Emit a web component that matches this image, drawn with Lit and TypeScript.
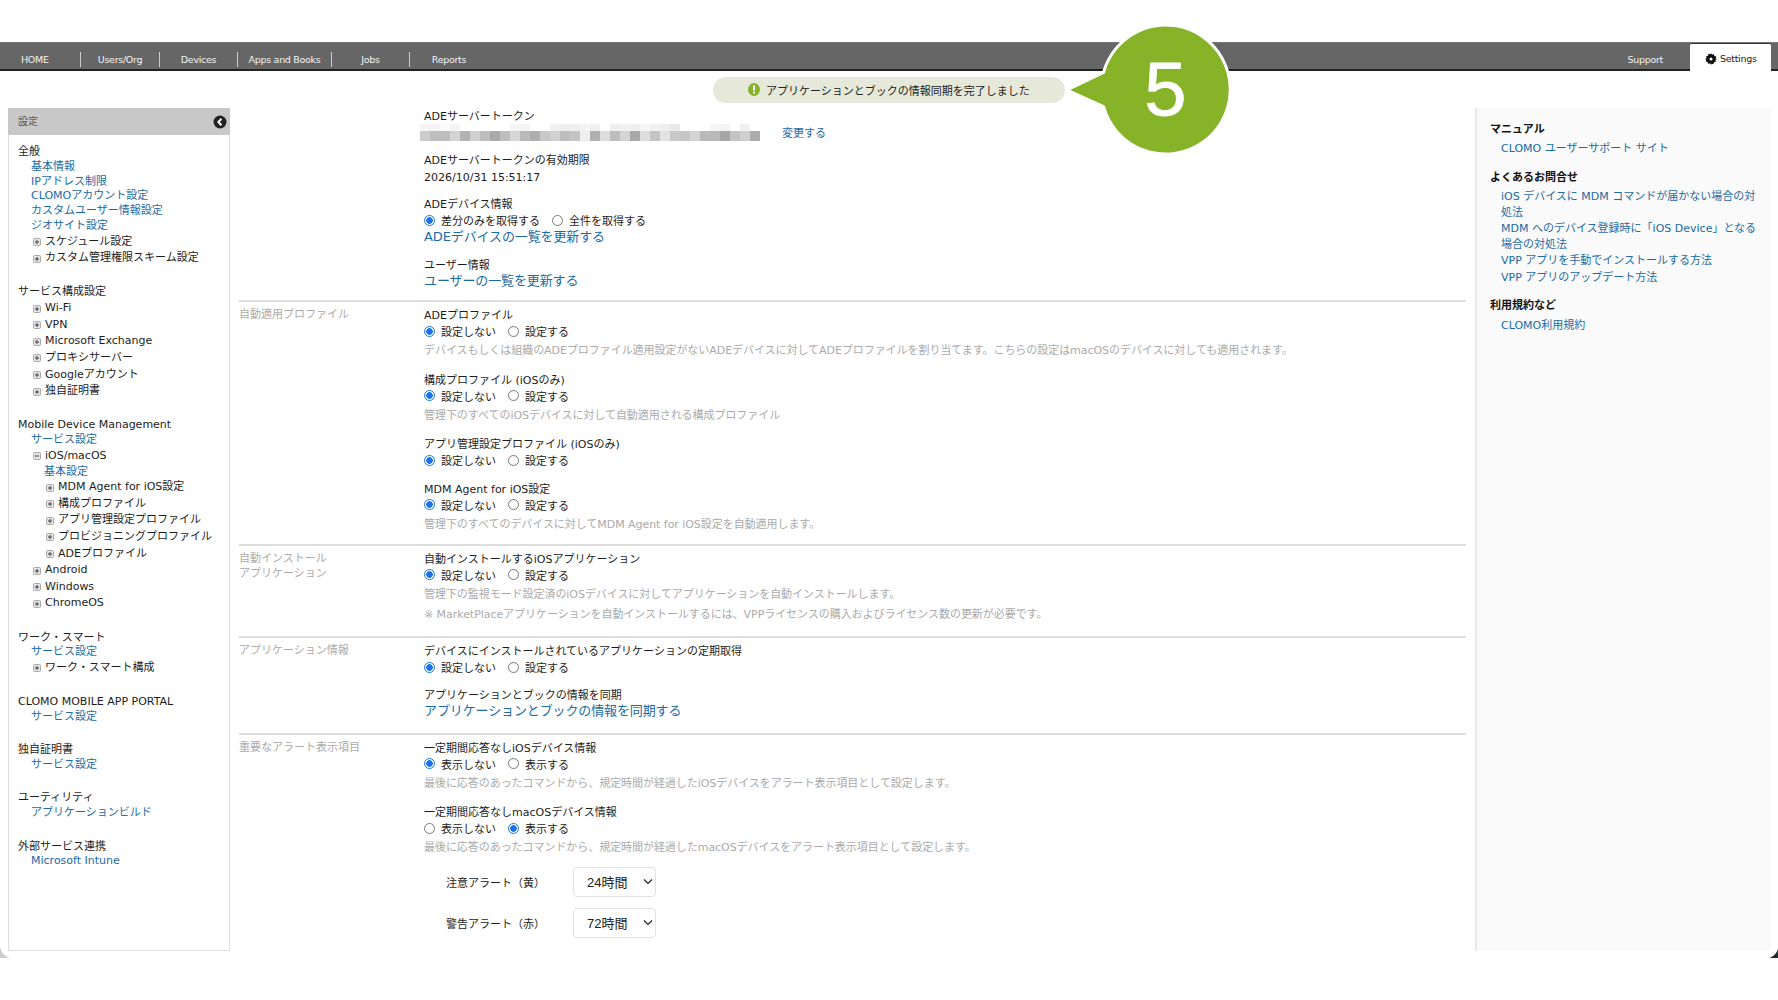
import { LitElement, html, css } from 'lit';
import { customElement } from 'lit/decorators.js';

type NavRow = { t: 'head' | 'link' | 'sub' | 'tree' | 'open' | 'tree2'; label: string };

const SIDE_GROUPS: NavRow[][] = [
  [
    { t: 'head', label: '全般' },
    { t: 'link', label: '基本情報' },
    { t: 'link', label: 'IPアドレス制限' },
    { t: 'link', label: 'CLOMOアカウント設定' },
    { t: 'link', label: 'カスタムユーザー情報設定' },
    { t: 'link', label: 'ジオサイト設定' },
    { t: 'tree', label: 'スケジュール設定' },
    { t: 'tree', label: 'カスタム管理権限スキーム設定' },
  ],
  [
    { t: 'head', label: 'サービス構成設定' },
    { t: 'tree', label: 'Wi-Fi' },
    { t: 'tree', label: 'VPN' },
    { t: 'tree', label: 'Microsoft Exchange' },
    { t: 'tree', label: 'プロキシサーバー' },
    { t: 'tree', label: 'Googleアカウント' },
    { t: 'tree', label: '独自証明書' },
  ],
  [
    { t: 'head', label: 'Mobile Device Management' },
    { t: 'link', label: 'サービス設定' },
    { t: 'open', label: 'iOS/macOS' },
    { t: 'sub', label: '基本設定' },
    { t: 'tree2', label: 'MDM Agent for iOS設定' },
    { t: 'tree2', label: '構成プロファイル' },
    { t: 'tree2', label: 'アプリ管理設定プロファイル' },
    { t: 'tree2', label: 'プロビジョニングプロファイル' },
    { t: 'tree2', label: 'ADEプロファイル' },
    { t: 'tree', label: 'Android' },
    { t: 'tree', label: 'Windows' },
    { t: 'tree', label: 'ChromeOS' },
  ],
  [
    { t: 'head', label: 'ワーク・スマート' },
    { t: 'link', label: 'サービス設定' },
    { t: 'tree', label: 'ワーク・スマート構成' },
  ],
  [
    { t: 'head', label: 'CLOMO MOBILE APP PORTAL' },
    { t: 'link', label: 'サービス設定' },
  ],
  [
    { t: 'head', label: '独自証明書' },
    { t: 'link', label: 'サービス設定' },
  ],
  [
    { t: 'head', label: 'ユーティリティ' },
    { t: 'link', label: 'アプリケーションビルド' },
  ],
  [
    { t: 'head', label: '外部サービス連携' },
    { t: 'link', label: 'Microsoft Intune' },
  ],
];

// blurred token, one gray value per 10px cell
const TOKEN_TOP = [244, 244, 250, 244, 255, 255, 255, 255, 255, 244, 244, 255, 255, 240, 238, 238, 244, 240, 255, 238, 240, 238, 246, 240, 238, 232, 255, 255, 255, 246, 244, 255, 240, 255];
const TOKEN_BOTTOM = [205, 190, 190, 212, 178, 208, 190, 170, 190, 214, 186, 174, 200, 208, 190, 196, 238, 176, 220, 188, 212, 168, 222, 196, 226, 200, 198, 212, 186, 186, 166, 196, 208, 172];

@customElement('app-root')
export class AppRoot extends LitElement {
  static styles = css`
    :host {
      display: block;
      position: relative;
      width: 1778px;
      height: 1000px;
      overflow: hidden;
      background: #fff;
      font-family: 'DejaVu Sans', 'Noto Sans CJK JP', sans-serif;
      font-size: 11px;
      color: #1c1c1c;
      padding-top: 42px;
      box-sizing: border-box;
    }
    a {
      color: #1b6aa5;
      text-decoration: none;
    }

    /* top bar */
    .topbar {
      display: flex;
      align-items: flex-end;
      height: 29px;
      box-sizing: border-box;
      background: #666;
      border-top: 1px solid #777;
      border-bottom: 2px solid #222;
      color: #f2f2f2;
      font-size: 9.5px;
      letter-spacing: -0.3px;
    }
    .tab {
      height: 15px;
      line-height: 15px;
      margin-bottom: 2px;
      text-align: center;
      border-right: 1px solid #ccc;
      box-sizing: border-box;
    }
    .tab.w80 { width: 79px; }
    .tab.home { width: 81px; text-align: left; padding-left: 21px; }
    .tab.w78 { width: 78px; }
    .tab.w94 { width: 94px; }
    .tab.last { border-right: 0; width: 78px; }
    .spacer { flex: 1; }
    .support {
      height: 15px;
      line-height: 15px;
      margin: 0 27px 2px 0;
    }
    .settings {
      display: flex;
      align-items: center;
      gap: 3px;
      width: 81px;
      height: 28px;
      margin-bottom: -2px;
      margin-right: 7px;
      padding: 2px 0 0 15px;
      box-sizing: border-box;
      background: #fff;
      color: #222;
      border-top: 1px solid #333;
      border-radius: 2px 2px 0 0;
    }

    /* columns */
    .columns {
      display: flex;
      align-items: flex-start;
      padding: 37px 0 0 8px;
    }
    .side {
      width: 222px;
      height: 843px;
      box-sizing: border-box;
      border: 1px solid #e0e0e0;
      border-top: 0;
      flex: none;
    }
    .side-head {
      display: flex;
      align-items: center;
      justify-content: space-between;
      height: 27px;
      margin: 0 -1px;
      padding: 0 3px 0 10px;
      background: #c8c8c8;
      color: #555;
      font-size: 10px;
    }
    .side-head span {
      margin-top: -3px;
    }
    .side-body {
      padding: 9px 0 0 9px;
    }
    .group {
      margin-bottom: 18.5px;
    }
    .row {
      display: flex;
      align-items: center;
      box-sizing: border-box;
      padding-top: 2px;
      line-height: 14.8px;
      height: 14.8px;
      white-space: nowrap;
    }
    .row.link { padding-left: 13px; }
    .row.sub { padding-left: 26px; }
    .row.tree, .row.open { height: 16.6px; padding-left: 15px; gap: 4px; }
    .row.tree2 { height: 16.6px; padding-left: 28px; gap: 4px; }

    .main {
      width: 1227px;
      margin-left: 9px;
      flex: none;
    }
    .section {
      display: flex;
      padding: 5px 0 11px;
      border-bottom: 2px solid #ddd;
    }
    .section.first { padding: 0 0 11.5px; }
    .section.install { padding-bottom: 13.5px; }
    .section.sync { padding-bottom: 13.5px; }
    .section.end { border-bottom: 0; }
    .sec-label {
      width: 185px;
      flex: none;
      color: #aaa;
      line-height: 15px;
    }
    .sec-body {
      flex: 1;
      min-width: 0;
    }
    .field + .field {
      margin-top: 12.5px;
    }
    .field + .field.mdm {
      margin-top: 11.5px;
    }
    .first .field + .field {
      margin-top: 11.5px;
    }
    .sync .field + .field {
      margin-top: 11px;
    }
    .end .field.alerts {
      margin-top: 11px;
    }
    .title {
      height: 16px;
      line-height: 18px;
    }
    .value {
      height: 17px;
      line-height: 19px;
    }
    .biglink {
      display: block;
      height: 16px;
      font-size: 13px;
      line-height: 16px;
      letter-spacing: -0.12px;
    }
    .help {
      height: 18px;
      margin-top: 1px;
      color: #aaa;
      line-height: 19px;
      white-space: nowrap;
      letter-spacing: -0.05px;
    }
    .help.note {
      margin-top: 2px;
    }
    .token-row {
      display: flex;
      align-items: center;
      height: 16px;
      margin-left: -4px;
    }
    .token {
      display: flex;
      flex-direction: column;
    }
    .token-line {
      display: flex;
    }
    .token-line.a { height: 7px; }
    .token-line.b { height: 10px; }
    .token-cell {
      width: 10px;
    }
    .change {
      margin-left: 22px;
    }
    .radios {
      display: flex;
      align-items: center;
      box-sizing: border-box;
      padding-bottom: 1px;
      height: 17px;
      gap: 12px;
    }
    .radios label {
      display: flex;
      align-items: center;
      gap: 6px;
    }
    input[type='radio'] {
      appearance: none;
      width: 11px;
      height: 11px;
      margin: 0;
      box-sizing: border-box;
      border: 1px solid #777;
      border-radius: 50%;
      background: #fff;
    }
    input[type='radio']:checked {
      border: 1.5px solid #1a73e8;
      background: radial-gradient(circle, #1a73e8 0 3px, #fff 3.6px);
    }
    .alert {
      display: flex;
      align-items: center;
      height: 30px;
      padding-left: 22px;
    }
    .alert + .alert {
      margin-top: 11px;
    }
    .alert span {
      width: 127px;
    }
    .select-wrap {
      position: relative;
      width: 83px;
      height: 30px;
    }
    select {
      appearance: none;
      width: 100%;
      height: 100%;
      padding: 0 0 0 13px;
      box-sizing: border-box;
      border: 1px solid #e2e2e2;
      border-radius: 4px;
      background: #fff;
      color: #222;
      font: 13px 'Liberation Sans', 'Noto Sans CJK JP', sans-serif;
    }
    .chevron {
      position: absolute;
      right: 3px;
      top: 11px;
      pointer-events: none;
    }

    .help-panel {
      width: 296px;
      height: 843px;
      box-sizing: border-box;
      margin-left: 9px;
      padding: 13.5px 0 0 13px;
      background: #fafafa;
      border-left: 2px solid #e8e8e8;
      flex: none;
    }
    .help-panel h4 {
      height: 15px;
      margin: 0 0 4.5px;
      font-size: 11px;
      font-weight: 700;
      line-height: 15px;
      color: #111;
    }
    .help-panel ul {
      list-style: none;
      margin: 0 0 13px;
      padding: 0 0 0 11px;
    }
    .help-panel li {
      margin-bottom: 1px;
    }
    .help-panel li a {
      display: block;
      height: 15.5px;
      line-height: 15.5px;
      white-space: nowrap;
    }
    .help-panel li a.two {
      height: 31px;
    }
    .help-panel li a span {
      display: block;
      height: 15.5px;
    }

    /* overlays */
    .toast {
      position: absolute;
      left: 713px;
      top: 77px;
      width: 352px;
      height: 26px;
      display: flex;
      align-items: center;
      gap: 6px;
      padding: 0 0 1px 35px;
      box-sizing: border-box;
      border-radius: 13px;
      background: #e6e9da;
      color: #222;
      font-size: 11px;
    }
    .bubble {
      position: absolute;
      left: 1062px;
      top: 20px;
    }
    .corner {
      position: absolute;
      top: 947px;
    }
    .corner.left { left: 0; }
    .corner.right { left: 1768px; }
  `;

  private plus(open = false) {
    return html`<svg width="8" height="8" viewBox="0 0 8 8" style="flex:none">
      <rect x="0.5" y="0.5" width="7" height="7" rx="1" fill="#e4e4e4" stroke="#aaa" />
      <path d=${open ? 'M2 4h4' : 'M2 4h4M4 2v4'} stroke="#444" fill="none" />
    </svg>`;
  }

  private navRow(r: NavRow) {
    if (r.t === 'head') return html`<div class="row">${r.label}</div>`;
    if (r.t === 'link' || r.t === 'sub') return html`<div class="row ${r.t}"><a href="#">${r.label}</a></div>`;
    return html`<div class="row ${r.t}">${this.plus(r.t === 'open')}<span>${r.label}</span></div>`;
  }

  private radios(a: string, b: string, second = false) {
    const name = a + Math.random();
    return html`<div class="radios">
      <label><input type="radio" name=${name} ?checked=${!second} />${a}</label>
      <label><input type="radio" name=${name} ?checked=${second} />${b}</label>
    </div>`;
  }

  private setRadios() {
    return this.radios('設定しない', '設定する');
  }

  private token() {
    const line = (vals: number[], cls: string) =>
      html`<div class="token-line ${cls}">
        ${vals.map((v) => html`<div class="token-cell" style="background:rgb(${v},${v},${v})"></div>`)}
      </div>`;
    return html`<div class="token">${line(TOKEN_TOP, 'a')}${line(TOKEN_BOTTOM, 'b')}</div>`;
  }

  private alertRow(label: string, hours: string) {
    return html`<div class="alert">
      <span>${label}</span>
      <div class="select-wrap">
        <select><option>${hours}</option></select>
        <svg class="chevron" width="10" height="7" viewBox="0 0 10 7"><path d="M1 1.5l4 4 4-4" stroke="#222" stroke-width="1.2" fill="none" /></svg>
      </div>
    </div>`;
  }

  render() {
    return html`
      <div class="topbar">
        <div class="tab home">HOME</div>
        <div class="tab w80">Users/Org</div>
        <div class="tab w78">Devices</div>
        <div class="tab w94">Apps and Books</div>
        <div class="tab w78">Jobs</div>
        <div class="tab last">Reports</div>
        <div class="spacer"></div>
        <div class="support">Support</div>
        <div class="settings">
          <svg width="12" height="12" viewBox="0 0 12 12">
            <path d="M6 0l1 1.7 1.9-.6.4 2 2 .4-.6 1.9L12 6l-1.7 1 .6 1.9-2 .4-.4 2-1.9-.6L6 12l-1-1.7-1.9.6-.4-2-2-.4.6-1.9L0 6l1.7-1-.6-1.9 2-.4.4-2 1.9.6z" fill="#111" />
            <circle cx="6" cy="6" r="1.5" fill="#fff" />
          </svg>
          <span>Settings</span>
        </div>
      </div>

      <div class="columns">
        <aside class="side">
          <div class="side-head">
            <span>設定</span>
            <svg width="14" height="14" viewBox="0 0 14 14">
              <circle cx="7" cy="7" r="6.5" fill="#222" />
              <path d="M8.4 3.8L5.4 7l3 3.2" stroke="#fff" stroke-width="2" fill="none" />
            </svg>
          </div>
          <div class="side-body">
            ${SIDE_GROUPS.map((g) => html`<div class="group">${g.map((r) => this.navRow(r))}</div>`)}
          </div>
        </aside>

        <main class="main">
          <section class="section first">
            <div class="sec-label"></div>
            <div class="sec-body">
              <div class="field">
                <div class="title">ADEサーバートークン</div>
                <div class="token-row">${this.token()}<a class="change" href="#">変更する</a></div>
              </div>
              <div class="field">
                <div class="title">ADEサーバートークンの有効期限</div>
                <div class="value">2026/10/31 15:51:17</div>
              </div>
              <div class="field">
                <div class="title">ADEデバイス情報</div>
                ${this.radios('差分のみを取得する', '全件を取得する')}
                <a class="biglink" href="#">ADEデバイスの一覧を更新する</a>
              </div>
              <div class="field">
                <div class="title">ユーザー情報</div>
                <a class="biglink" href="#">ユーザーの一覧を更新する</a>
              </div>
            </div>
          </section>

          <section class="section">
            <div class="sec-label">自動適用プロファイル</div>
            <div class="sec-body">
              <div class="field">
                <div class="title">ADEプロファイル</div>
                ${this.setRadios()}
                <div class="help">デバイスもしくは組織のADEプロファイル適用設定がないADEデバイスに対してADEプロファイルを割り当てます。こちらの設定はmacOSのデバイスに対しても適用されます。</div>
              </div>
              <div class="field">
                <div class="title">構成プロファイル (iOSのみ)</div>
                ${this.setRadios()}
                <div class="help">管理下のすべてのiOSデバイスに対して自動適用される構成プロファイル</div>
              </div>
              <div class="field">
                <div class="title">アプリ管理設定プロファイル (iOSのみ)</div>
                ${this.setRadios()}
              </div>
              <div class="field mdm">
                <div class="title">MDM Agent for iOS設定</div>
                ${this.setRadios()}
                <div class="help">管理下のすべてのデバイスに対してMDM Agent for iOS設定を自動適用します。</div>
              </div>
            </div>
          </section>

          <section class="section install">
            <div class="sec-label">自動インストール<br />アプリケーション</div>
            <div class="sec-body">
              <div class="field">
                <div class="title">自動インストールするiOSアプリケーション</div>
                ${this.setRadios()}
                <div class="help">管理下の監視モード設定済のiOSデバイスに対してアプリケーションを自動インストールします。</div>
                <div class="help note">※ MarketPlaceアプリケーションを自動インストールするには、VPPライセンスの購入およびライセンス数の更新が必要です。</div>
              </div>
            </div>
          </section>

          <section class="section sync">
            <div class="sec-label">アプリケーション情報</div>
            <div class="sec-body">
              <div class="field">
                <div class="title">デバイスにインストールされているアプリケーションの定期取得</div>
                ${this.setRadios()}
              </div>
              <div class="field">
                <div class="title">アプリケーションとブックの情報を同期</div>
                <a class="biglink" href="#">アプリケーションとブックの情報を同期する</a>
              </div>
            </div>
          </section>

          <section class="section end">
            <div class="sec-label">重要なアラート表示項目</div>
            <div class="sec-body">
              <div class="field">
                <div class="title">一定期間応答なしiOSデバイス情報</div>
                ${this.radios('表示しない', '表示する')}
                <div class="help">最後に応答のあったコマンドから、規定時間が経過したiOSデバイスをアラート表示項目として設定します。</div>
              </div>
              <div class="field">
                <div class="title">一定期間応答なしmacOSデバイス情報</div>
                ${this.radios('表示しない', '表示する', true)}
                <div class="help">最後に応答のあったコマンドから、規定時間が経過したmacOSデバイスをアラート表示項目として設定します。</div>
              </div>
              <div class="field alerts">
                ${this.alertRow('注意アラート（黄）', '24時間')}
                ${this.alertRow('警告アラート（赤）', '72時間')}
              </div>
            </div>
          </section>
        </main>

        <aside class="help-panel">
          <h4>マニュアル</h4>
          <ul><li><a href="#">CLOMO ユーザーサポート サイト</a></li></ul>
          <h4>よくあるお問合せ</h4>
          <ul>
            <li><a class="two" href="#"><span>iOS デバイスに MDM コマンドが届かない場合の対</span><span>処法</span></a></li>
            <li><a class="two" href="#"><span>MDM へのデバイス登録時に「iOS Device」となる</span><span>場合の対処法</span></a></li>
            <li><a href="#">VPP アプリを手動でインストールする方法</a></li>
            <li><a href="#">VPP アプリのアップデート方法</a></li>
          </ul>
          <h4>利用規約など</h4>
          <ul><li><a href="#">CLOMO利用規約</a></li></ul>
        </aside>
      </div>

      <div class="toast">
        <svg width="12" height="13" viewBox="0 0 12 13">
          <ellipse cx="6" cy="6.5" rx="6" ry="6.5" fill="#86b327" />
          <path d="M6 2.6v5M6 8.8v1.7" stroke="#fff" stroke-width="2" />
        </svg>
        <span>アプリケーションとブックの情報同期を完了しました</span>
      </div>

      <svg class="bubble" width="176" height="140" viewBox="0 0 176 140">
        <path d="M41.5 52.5A64.5 64.5 0 1 1 41.5 86.5L5 70Z" fill="#86b327" stroke="#fff" stroke-width="3" stroke-linejoin="round" />
        <text x="103.5" y="95" text-anchor="middle" fill="#fff" stroke="#fff" stroke-width="0.8" font-family="'Liberation Sans', sans-serif" font-size="76">5</text>
      </svg>

      <svg class="corner left" width="10" height="11" viewBox="0 0 10 11">
        <path d="M0 0C1 5 5 10 10 11H0Z" fill="#ccc" />
      </svg>
      <svg class="corner right" width="10" height="11" viewBox="0 0 10 11">
        <path d="M10 2C9 6 5 10 1 11H10Z" fill="#1f2a2a" />
      </svg>
    `;
  }
}
